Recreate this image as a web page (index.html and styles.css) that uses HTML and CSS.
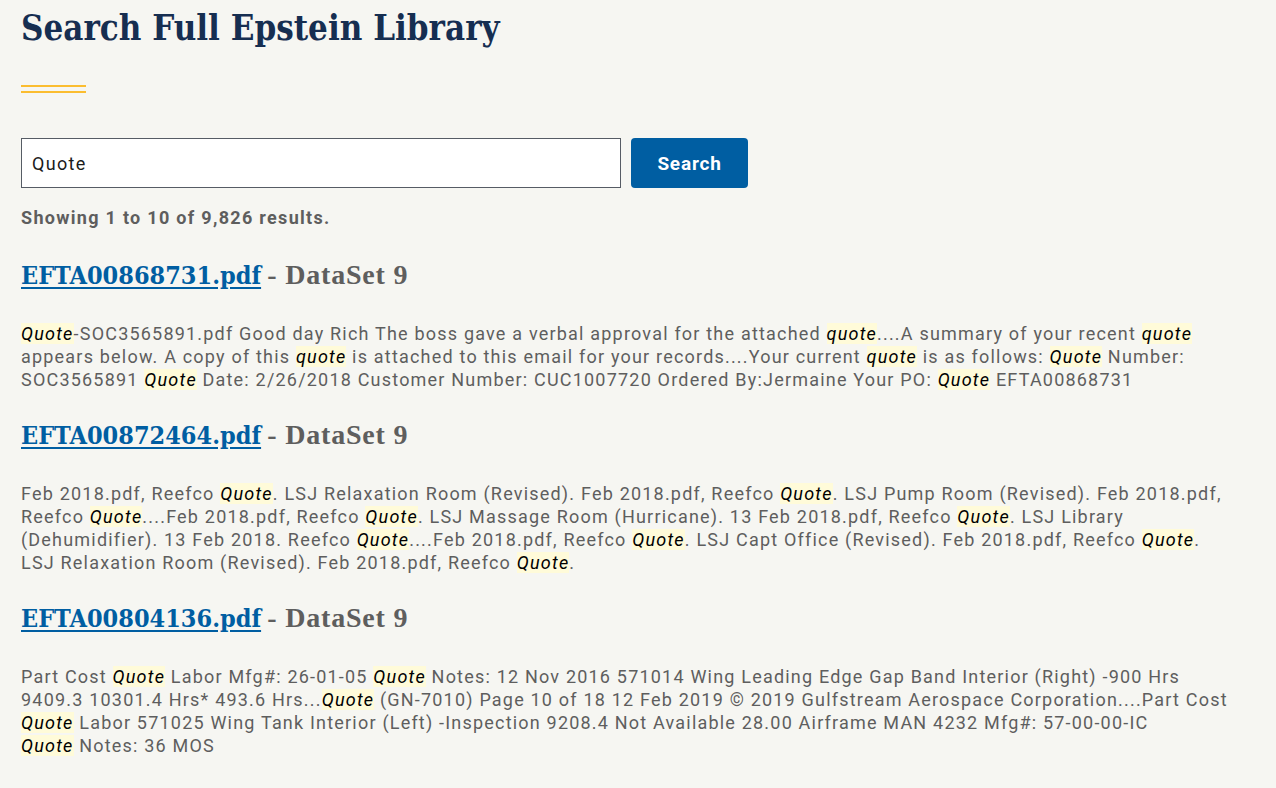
FILE: index.html
```html
<!DOCTYPE html>
<html lang="en">
<head>
    <meta charset="UTF-8">
    <meta name="viewport" content="width=device-width, initial-scale=1.0">
    <title>Search Full Epstein Library</title>
    <link rel="stylesheet" href="styles.css">
</head>
<body>
    <div class="page">
        <h1 class="pageTitle">Search Full Epstein Library</h1>
        <div class="titleRule"></div>

        <form class="searchForm">
            <input class="searchInput" type="text" value="Quote">
            <button class="searchButton" type="button">Search</button>
        </form>

        <p class="resultCount">Showing 1 to 10 of 9,826 results.</p>

        <div class="result">
            <h2 class="resultTitle"><a href="#">EFTA00868731.pdf</a> <span class="dataset">- DataSet 9</span></h2>
            <p class="snippet"><mark>Quote</mark>-SOC3565891.pdf Good day Rich The boss gave a verbal approval for the attached <mark>quote</mark>....A summary of your recent <mark>quote</mark> appears below. A copy of this <mark>quote</mark> is attached to this email for your records....Your current <mark>quote</mark> is as follows: <mark>Quote</mark> Number: SOC3565891 <mark>Quote</mark> Date: 2/26/2018 Customer Number: CUC1007720 Ordered By:Jermaine Your PO: <mark>Quote</mark> EFTA00868731</p>
        </div>

        <div class="result">
            <h2 class="resultTitle"><a href="#">EFTA00872464.pdf</a> <span class="dataset">- DataSet 9</span></h2>
            <p class="snippet">Feb 2018.pdf, Reefco <mark>Quote</mark>. LSJ Relaxation Room (Revised). Feb 2018.pdf, Reefco <mark>Quote</mark>. LSJ Pump Room (Revised). Feb 2018.pdf, Reefco <mark>Quote</mark>....Feb 2018.pdf, Reefco <mark>Quote</mark>. LSJ Massage Room (Hurricane). 13 Feb 2018.pdf, Reefco <mark>Quote</mark>. LSJ Library (Dehumidifier). 13 Feb 2018. Reefco <mark>Quote</mark>....Feb 2018.pdf, Reefco <mark>Quote</mark>. LSJ Capt Office (Revised). Feb 2018.pdf, Reefco <mark>Quote</mark>. LSJ Relaxation Room (Revised). Feb 2018.pdf, Reefco <mark>Quote</mark>.</p>
        </div>

        <div class="result">
            <h2 class="resultTitle"><a href="#">EFTA00804136.pdf</a> <span class="dataset">- DataSet 9</span></h2>
            <p class="snippet">Part Cost <mark>Quote</mark> Labor Mfg#: 26-01-05 <mark>Quote</mark> Notes: 12 Nov 2016 571014 Wing Leading Edge Gap Band Interior (Right) -900 Hrs 9409.3 10301.4 Hrs* 493.6 Hrs...<mark>Quote</mark> (GN-7010) Page 10 of 18 12 Feb 2019 © 2019 Gulfstream Aerospace Corporation....Part Cost <mark>Quote</mark> Labor 571025 Wing Tank Interior (Left) -Inspection 9208.4 Not Available 28.00 Airframe MAN 4232 Mfg#: 57-00-00-IC <mark>Quote</mark>&nbsp;Notes: 36 MOS</p>
        </div>
    </div>
</body>
</html>
```

FILE: styles.css
```css
html, body {
    margin: 0;
    background-color: #f6f6f2;
    color: #5e5e5e;
    font-family: Roboto, "Liberation Sans", sans-serif;
}

.page {
    padding: 0 21px;
    max-width: 1207px;
}

.pageTitle {
    margin: 0;
    padding-top: 6px;
    font-family: "DejaVu Serif Condensed", "DejaVu Serif", serif;
    font-stretch: condensed;
    font-size: 34.6px;
    font-weight: bold;
    line-height: 44px;
    color: #162e51;
}

.titleRule {
    width: 65px;
    height: 4px;
    margin-top: 35px;
    border-top: 2px solid #fbbd30;
    border-bottom: 2px solid #fbbd30;
}

.searchForm {
    display: flex;
    gap: 10px;
    margin-top: 45px;
}

.searchInput {
    box-sizing: border-box;
    width: 600px;
    height: 50px;
    padding: 0 10px;
    border: 1px solid #565c65;
    background: #fff;
    font-family: Roboto, sans-serif;
    font-size: 18px;
    letter-spacing: 1.3px;
    color: #1b1b1b;
}

.searchButton {
    box-sizing: border-box;
    width: 117px;
    height: 50px;
    border: 0;
    border-radius: 4px;
    background-color: #005ea2;
    color: #fff;
    font-family: Roboto, sans-serif;
    font-size: 19px;
    font-weight: bold;
    letter-spacing: 0.8px;
}

.resultCount {
    margin: 20px 0 0 0;
    font-size: 18px;
    line-height: 20px;
    font-weight: bold;
    letter-spacing: 1.3px;
    color: #5e5e5e;
}

.result {
    margin-top: 30px;
}

.result + .result {
    margin-top: 27px;
}

.resultTitle {
    margin: 0;
    font-size: 25px;
    line-height: 34px;
}

.resultTitle a {
    font-family: "DejaVu Serif Condensed", "DejaVu Serif", serif;
    font-stretch: condensed;
    font-weight: bold;
    color: #005ea2;
    text-decoration: underline;
    text-underline-offset: 3px;
}

.dataset {
    font-family: "Liberation Serif", serif;
    font-weight: bold;
    font-size: 28px;
    letter-spacing: 0.8px;
    color: #5e5e5e;
}

.snippet {
    margin: 29px 0 0 0;
    font-size: 18px;
    line-height: 23px;
    letter-spacing: 1.2px;
}

mark {
    background-color: #fffbd9;
    color: #000;
    font-style: italic;
}
```
